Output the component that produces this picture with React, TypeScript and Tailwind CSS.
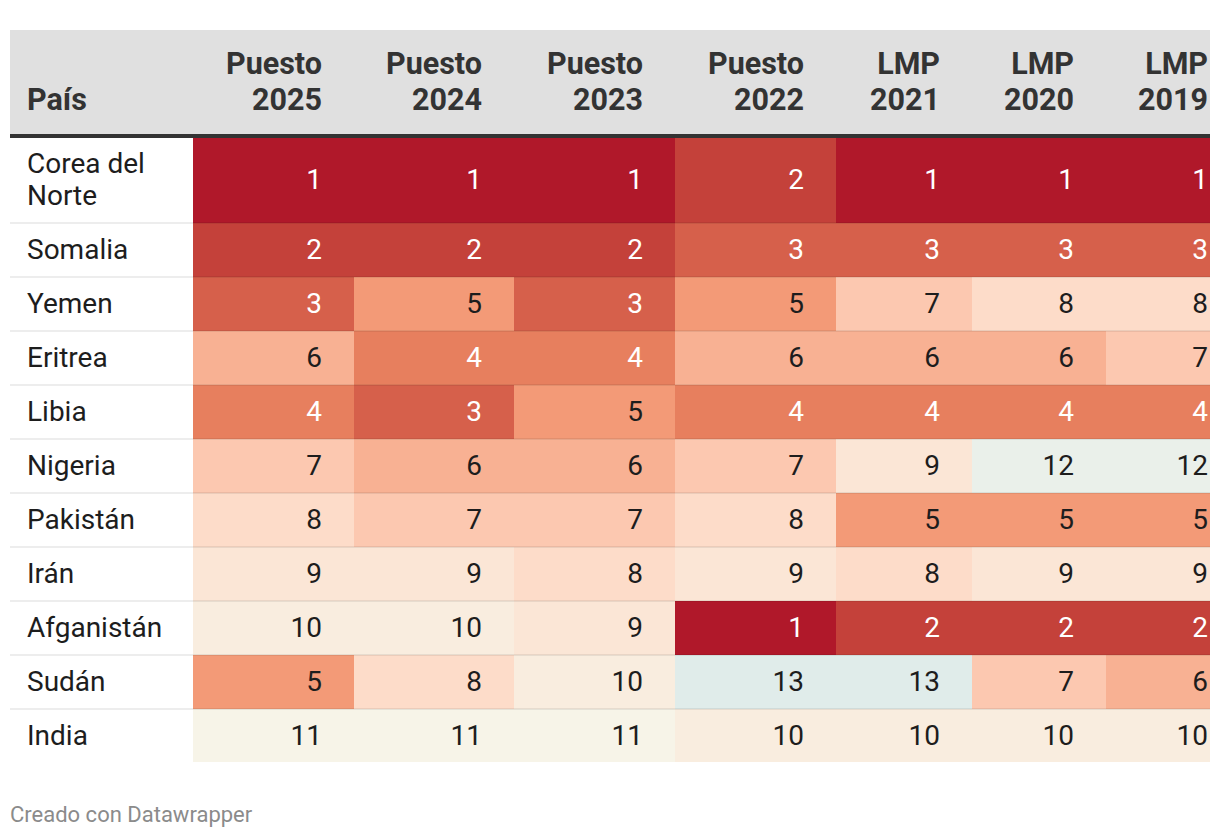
import React from "react";

type Row = { country: string[]; values: number[] };

const COLUMNS = [
  ["Puesto", "2025"],
  ["Puesto", "2024"],
  ["Puesto", "2023"],
  ["Puesto", "2022"],
  ["LMP", "2021"],
  ["LMP", "2020"],
  ["LMP", "2019"],
];

const ROWS: Row[] = [
  { country: ["Corea del", "Norte"], values: [1, 1, 1, 2, 1, 1, 1] },
  { country: ["Somalia"], values: [2, 2, 2, 3, 3, 3, 3] },
  { country: ["Yemen"], values: [3, 5, 3, 5, 7, 8, 8] },
  { country: ["Eritrea"], values: [6, 4, 4, 6, 6, 6, 7] },
  { country: ["Libia"], values: [4, 3, 5, 4, 4, 4, 4] },
  { country: ["Nigeria"], values: [7, 6, 6, 7, 9, 12, 12] },
  { country: ["Pakistán"], values: [8, 7, 7, 8, 5, 5, 5] },
  { country: ["Irán"], values: [9, 9, 8, 9, 8, 9, 9] },
  { country: ["Afganistán"], values: [10, 10, 9, 1, 2, 2, 2] },
  { country: ["Sudán"], values: [5, 8, 10, 13, 13, 7, 6] },
  { country: ["India"], values: [11, 11, 11, 10, 10, 10, 10] },
];

// heat scale, one class per rank
const CELL: Record<number, string> = {
  1: "bg-[#b0182a] text-white",
  2: "bg-[#c4413a] text-white",
  3: "bg-[#d6604b] text-white",
  4: "bg-[#e77f5e] text-white",
  5: "bg-[#f39a77] text-[#1d1d1d]",
  6: "bg-[#f8b193] text-[#1d1d1d]",
  7: "bg-[#fcc8b0] text-[#1d1d1d]",
  8: "bg-[#fddcc9] text-[#1d1d1d]",
  9: "bg-[#fbe6d6] text-[#1d1d1d]",
  10: "bg-[#f9eddf] text-[#1d1d1d]",
  11: "bg-[#f7f4e8] text-[#1d1d1d]",
  12: "bg-[#eaf0ea] text-[#1d1d1d]",
  13: "bg-[#e0ecea] text-[#1d1d1d]",
};

const WIDTHS = ["w-[161px]", "w-[160px]", "w-[161px]", "w-[161px]", "w-[136px]", "w-[134px]", "w-[104px]"];

export default function App() {
  return (
    <div className="min-h-screen bg-white px-[10px] pt-[30px] font-['Roboto',_'Liberation_Sans',_sans-serif]">
      <table className="w-[1200px] table-fixed border-collapse">
        <colgroup>
          <col className="w-[183px]" />
          {WIDTHS.map((w, i) => (
            <col key={i} className={w} />
          ))}
        </colgroup>
        <thead>
          <tr className="border-b-4 border-[#333333] bg-[#e0e0e0]">
            <th className="pb-[16px] pl-[17px] text-left align-bottom text-[30.5px] leading-[36px] font-bold text-[#333333]">
              País
            </th>
            {COLUMNS.map((c, i) => (
              <th
                key={i}
                className={
                  "pt-[16px] pb-[16px] text-right align-bottom text-[30.5px] leading-[36px] font-bold text-[#333333] " +
                  (i === COLUMNS.length - 1 ? "pr-[2px]" : "pr-[32px]")
                }
              >
                {c[0]}
                <br />
                {c[1]}
              </th>
            ))}
          </tr>
        </thead>
        <tbody>
          {ROWS.map((r, ri) => (
            <tr key={ri} className={ri === ROWS.length - 1 ? "" : "border-b-2 border-black/[0.07]"}>
              <td className="py-[10px] pl-[17px] text-left align-middle text-[28px] leading-[32px] text-[#1d1d1d]">
                {r.country.map((line, li) => (
                  <div key={li}>{line}</div>
                ))}
              </td>
              {r.values.map((v, vi) => (
                <td
                  key={vi}
                  className={
                    "py-[10px] text-right align-middle text-[28px] leading-[32px] " +
                    CELL[v] +
                    (vi === r.values.length - 1 ? " pr-[2px]" : " pr-[32px]")
                  }
                >
                  {v}
                </td>
              ))}
            </tr>
          ))}
        </tbody>
      </table>
      <p className="mt-[39px] text-[22px] leading-[28px] text-[#8b8b8b]">Creado con Datawrapper</p>
    </div>
  );
}
